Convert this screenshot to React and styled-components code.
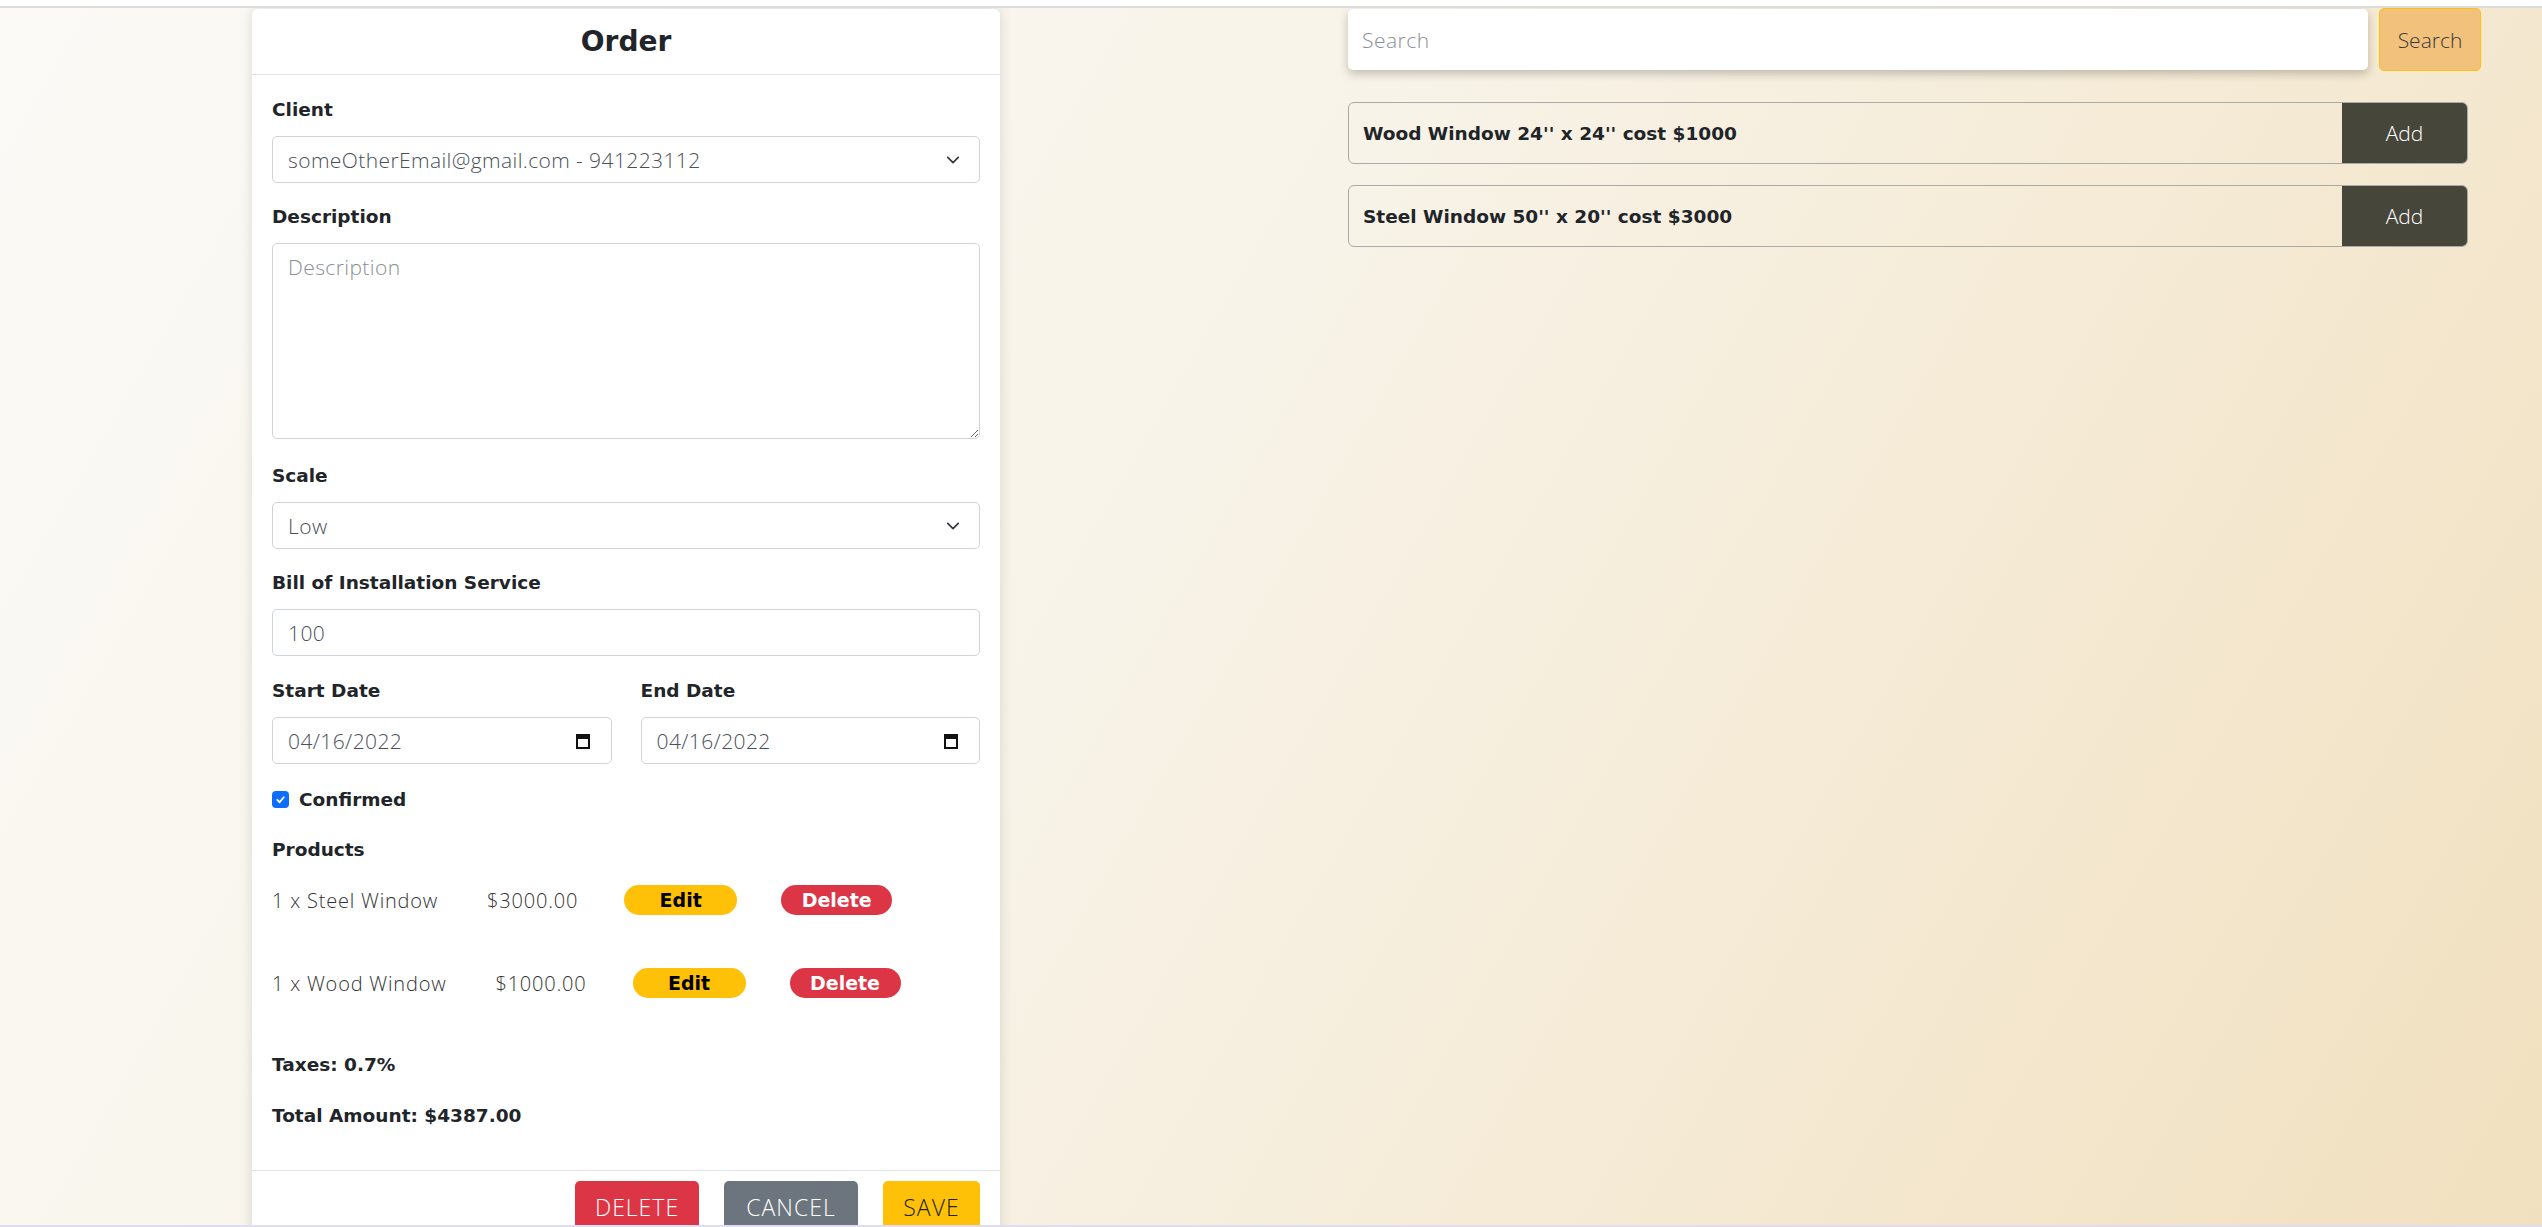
import React from 'react';
import styled, { createGlobalStyle } from 'styled-components';

const GlobalStyle = createGlobalStyle`
  html, body {
    margin: 0;
    height: 100%;
    overflow: hidden;
  }
  * {
    box-sizing: border-box;
  }
`;

const bold = `"DejaVu Sans", "Open Sans", sans-serif`;
const light = `"Open Sans", "Liberation Sans", sans-serif`;

const Page = styled.div`
  height: 100vh;
  display: flex;
  flex-direction: column;
  overflow: hidden;
  font-family: ${light};
  color: #212529;
`;

const TopBar = styled.div`
  height: 8px;
  background: #fff;
  border-bottom: 2px solid #dcdcdc;
  flex-shrink: 0;
`;

const BottomLine = styled.div`
  height: 2px;
  background: #e1ddf0;
  flex-shrink: 0;
`;

const Main = styled.main`
  flex: 1;
  min-height: 0;
  overflow: hidden;
  display: grid;
  grid-template-columns: 748px 1fr;
  column-gap: 348px;
  align-items: start;
  padding: 0 61px 0 252px;
  background: linear-gradient(120deg, #fbfaf6 0%, #f8f3e8 45%, #f1e0bf 100%);
`;

const Card = styled.section`
  margin-top: 1px;
  background: #fff;
  border-radius: 6px 6px 0 0;
  box-shadow: 0 0 14px rgba(0, 0, 0, 0.13);
`;

const CardHeader = styled.header`
  height: 66px;
  display: flex;
  align-items: center;
  justify-content: center;
  border-bottom: 1px solid #dee2e6;
`;

const Title = styled.h3`
  margin: 0;
  font-family: ${bold};
  font-weight: 700;
  font-size: 28px;
  color: #212529;
`;

const CardBody = styled.div`
  padding: 21px 20px 40px;
`;

const Field = styled.div`
  margin-bottom: ${(p) => p.$mb || 20}px;
`;

const Label = styled.label`
  display: block;
  font-family: ${bold};
  font-weight: 700;
  font-size: 18.5px;
  line-height: 28px;
  margin-bottom: 12px;
  color: #212529;
`;

const Control = styled.input`
  display: block;
  width: 100%;
  height: 47px;
  padding: 0 15px;
  border: 1px solid #ced4da;
  border-radius: 5px;
  background: #fff;
  font-family: ${light};
  font-weight: 300;
  font-size: 21px;
  letter-spacing: 0.4px;
  color: #495057;
  outline: none;
`;

const TextArea = styled.textarea`
  display: block;
  width: 100%;
  height: 196px;
  padding: 9px 15px;
  border: 1px solid #ced4da;
  border-radius: 5px;
  font-family: ${light};
  font-weight: 300;
  font-size: 21px;
  letter-spacing: 0.4px;
  color: #495057;
  resize: vertical;
  outline: none;

  &::placeholder {
    color: #8a8f96;
  }
`;

const InputWrap = styled.div`
  position: relative;
`;

const TrailingIcon = styled.span`
  position: absolute;
  right: ${(p) => p.$right || 18}px;
  top: 50%;
  transform: translateY(-50%);
  display: flex;
  pointer-events: none;
`;

const DateGrid = styled.div`
  display: grid;
  grid-template-columns: 1fr 1fr;
  column-gap: 29px;
  margin-bottom: 21px;
`;

const CheckRow = styled.div`
  display: flex;
  align-items: center;
  gap: 10px;
  height: 28px;
  margin-bottom: 23px;
  font-family: ${bold};
  font-weight: 700;
  font-size: 18.5px;
`;

const CheckBox = styled.span`
  width: 17px;
  height: 17px;
  border-radius: 4px;
  background: #0d6efd;
  display: flex;
  align-items: center;
  justify-content: center;
`;

const SectionTitle = styled.div`
  font-family: ${bold};
  font-weight: 700;
  font-size: 18.5px;
  line-height: 28px;
  margin-bottom: 21px;
`;

const ProductRow = styled.div`
  display: flex;
  align-items: center;
  height: 30px;
  margin-bottom: 53px;
`;

const ItemText = styled.span`
  font-family: ${light};
  font-weight: 300;
  font-size: 20px;
  letter-spacing: 0.8px;
  color: #333;
  margin-left: ${(p) => p.$ml || 0}px;
  white-space: nowrap;
`;

const Pill = styled.button`
  margin-left: ${(p) => p.$ml || 0}px;
  width: ${(p) => p.$w}px;
  height: 30px;
  border: none;
  border-radius: 15px;
  background: ${(p) => p.$bg};
  color: ${(p) => p.$fg};
  font-family: ${bold};
  font-weight: 700;
  font-size: 19px;
  padding: 0;
`;

const Summary = styled.div`
  font-family: ${bold};
  font-weight: 700;
  font-size: 18.5px;
  line-height: 28px;
  margin-bottom: ${(p) => p.$mb || 0}px;
`;

const CardFooter = styled.footer`
  display: flex;
  justify-content: flex-end;
  gap: 25px;
  padding: 10px 20px;
  border-top: 1px solid #dee2e6;
`;

const FooterButton = styled.button`
  width: ${(p) => p.$w}px;
  height: 52px;
  border: none;
  border-radius: 5px;
  background: ${(p) => p.$bg};
  color: ${(p) => p.$fg};
  font-family: ${light};
  font-weight: 300;
  font-size: 23px;
  letter-spacing: 1px;
  text-transform: uppercase;
  padding: 0;
`;

const RightColumn = styled.div`
  display: flex;
  flex-direction: column;
`;

const SearchRow = styled.div`
  display: flex;
  align-items: center;
  gap: 11px;
  height: 63px;
`;

const SearchInput = styled.input`
  flex: 1;
  height: 61px;
  border: none;
  border-radius: 5px;
  background: #fff;
  box-shadow: 0 4px 10px rgba(0, 0, 0, 0.22);
  padding: 0 14px;
  font-family: ${light};
  font-weight: 300;
  font-size: 21px;
  letter-spacing: 0.5px;
  outline: none;

  &::placeholder {
    color: #8a8f96;
  }
`;

const SearchButton = styled.button`
  width: 102px;
  height: 63px;
  border: 1px solid #ffc107;
  border-radius: 5px;
  background: #f2c17c;
  color: #3a3a3a;
  font-family: ${light};
  font-weight: 300;
  font-size: 21px;
  padding: 0;
`;

const Catalog = styled.div`
  margin-top: 31px;
  margin-right: 13px;
  display: flex;
  flex-direction: column;
  gap: 21px;
`;

const CatalogItem = styled.div`
  display: flex;
  height: 62px;
  border: 1px solid #aaa;
  border-radius: 6px;
  overflow: hidden;
`;

const CatalogName = styled.div`
  flex: 1;
  display: flex;
  align-items: center;
  padding-left: 14px;
  font-family: ${bold};
  font-weight: 700;
  font-size: 18.5px;
  color: #212529;
`;

const AddButton = styled.button`
  width: 125px;
  border: none;
  background: #47463a;
  color: #fff;
  font-family: ${light};
  font-weight: 300;
  font-size: 21px;
  padding: 0;
`;

const Chevron = () => (
  <svg width="14" height="14" viewBox="0 0 16 16" fill="none" stroke="#343a40" strokeWidth="2" strokeLinecap="round" strokeLinejoin="round">
    <path d="M2 5l6 6 6-6" />
  </svg>
);

const Calendar = () => (
  <svg width="14" height="16" viewBox="0 0 14 16">
    <path d="M1 2h12v13H1z" fill="none" stroke="#111" strokeWidth="2" />
    <rect x="1" y="2" width="12" height="4" fill="#111" />
  </svg>
);

const Check = () => (
  <svg width="11" height="11" viewBox="0 0 12 12" fill="none" stroke="#fff" strokeWidth="2" strokeLinecap="round" strokeLinejoin="round">
    <path d="M2.5 6.5l2.5 2.5 4.5-5.5" />
  </svg>
);

const items = [
  { name: '1 x Steel Window', price: '$3000.00' },
  { name: '1 x Wood Window', price: '$1000.00' },
];

const catalog = [
  `Wood Window 24'' x 24'' cost $1000`,
  `Steel Window 50'' x 20'' cost $3000`,
];

export default function App() {
  return (
    <Page>
      <GlobalStyle />
      <TopBar />
      <Main>
        <Card>
          <CardHeader>
            <Title>Order</Title>
          </CardHeader>
          <CardBody>
            <Field>
              <Label>Client</Label>
              <InputWrap>
                <Control readOnly value="someOtherEmail@gmail.com - 941223112" />
                <TrailingIcon $right={20}><Chevron /></TrailingIcon>
              </InputWrap>
            </Field>
            <Field $mb={23}>
              <Label>Description</Label>
              <TextArea placeholder="Description" />
            </Field>
            <Field>
              <Label>Scale</Label>
              <InputWrap>
                <Control readOnly value="Low" />
                <TrailingIcon $right={20}><Chevron /></TrailingIcon>
              </InputWrap>
            </Field>
            <Field $mb={21}>
              <Label>Bill of Installation Service</Label>
              <Control readOnly value="100" />
            </Field>
            <DateGrid>
              <div>
                <Label>Start Date</Label>
                <InputWrap>
                  <Control readOnly value="04/16/2022" />
                  <TrailingIcon $right={22}><Calendar /></TrailingIcon>
                </InputWrap>
              </div>
              <div>
                <Label>End Date</Label>
                <InputWrap>
                  <Control readOnly value="04/16/2022" />
                  <TrailingIcon $right={22}><Calendar /></TrailingIcon>
                </InputWrap>
              </div>
            </DateGrid>
            <CheckRow>
              <CheckBox><Check /></CheckBox>
              Confirmed
            </CheckRow>
            <SectionTitle>Products</SectionTitle>
            {items.map((it) => (
              <ProductRow key={it.name}>
                <ItemText>{it.name}</ItemText>
                <ItemText $ml={49}>{it.price}</ItemText>
                <Pill $ml={46} $w={113} $bg="#ffc107" $fg="#000">Edit</Pill>
                <Pill $ml={44} $w={111} $bg="#dc3545" $fg="#fff">Delete</Pill>
              </ProductRow>
            ))}
            <Summary $mb={23}>Taxes: 0.7%</Summary>
            <Summary>Total Amount: $4387.00</Summary>
          </CardBody>
          <CardFooter>
            <FooterButton $w={124} $bg="#dc3545" $fg="#fff">Delete</FooterButton>
            <FooterButton $w={134} $bg="#6c757d" $fg="#fff">Cancel</FooterButton>
            <FooterButton $w={97} $bg="#ffc107" $fg="#222">Save</FooterButton>
          </CardFooter>
        </Card>

        <RightColumn>
          <SearchRow>
            <SearchInput placeholder="Search" />
            <SearchButton>Search</SearchButton>
          </SearchRow>
          <Catalog>
            {catalog.map((c) => (
              <CatalogItem key={c}>
                <CatalogName>{c}</CatalogName>
                <AddButton>Add</AddButton>
              </CatalogItem>
            ))}
          </Catalog>
        </RightColumn>
      </Main>
      <BottomLine />
    </Page>
  );
}
